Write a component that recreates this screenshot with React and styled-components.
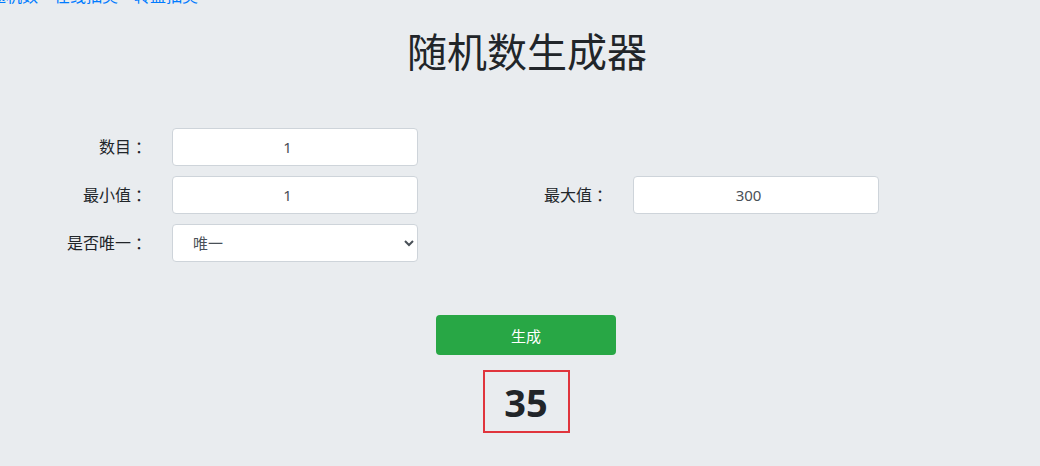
import React from "react";
import styled, { createGlobalStyle } from "styled-components";

const Global = createGlobalStyle`
  html, body { margin: 0; padding: 0; background: #e9ecef; }
  body {
    font-family: "Noto Sans", "Noto Sans CJK SC", sans-serif;
    color: #212529;
    overflow: hidden;
  }
`;

const Page = styled.div`
  width: 1040px;
  height: 466px;
  display: flex;
  flex-direction: column;
  box-sizing: border-box;
`;

const Nav = styled.nav`
  display: flex;
  gap: 16px;
  height: 20px;
  line-height: 20px;
  margin-top: -14px;
  margin-left: -10px;
  font-size: 16px;
`;

const NavLink = styled.a`
  color: #007bff;
  text-decoration: none;
`;

const Title = styled.h1`
  margin: 22px 0 0;
  padding-left: 14px;
  text-align: center;
  font-size: 40px;
  line-height: 48px;
  font-weight: 400;
  color: #212529;
`;

const Form = styled.div`
  margin-top: 52px;
  display: grid;
  grid-template-columns: 147px 246px 165px 246px;
  grid-auto-rows: 38px;
  column-gap: 25px;
  row-gap: 10px;
  align-items: center;
`;

const Label = styled.label`
  display: flex;
  justify-content: flex-end;
  align-items: center;
  height: 38px;
  font-size: 16px;
  line-height: 20px;
  color: #212529;
  white-space: nowrap;
`;

const Colon = styled.span`
  font-family: "Noto Sans CJK TC", "Noto Sans CJK SC", sans-serif;
  line-height: 20px;
`;

const Input = styled.input`
  box-sizing: border-box;
  width: 246px;
  height: 38px;
  border: 1px solid #ced4da;
  border-radius: 4px;
  background: #fff;
  text-align: center;
  font-family: "Noto Sans", "Noto Sans CJK SC", sans-serif;
  font-size: 15px;
  color: #495057;
  outline: none;
  padding: 0 12px;
`;

const Select = styled.select`
  box-sizing: border-box;
  width: 246px;
  height: 38px;
  border: 1px solid #ced4da;
  border-radius: 4px;
  background: #fff;
  font-family: "Noto Sans", "Noto Sans CJK SC", sans-serif;
  font-size: 15px;
  color: #495057;
  padding: 0 6px 0 16px;
  outline: none;
`;

const Actions = styled.div`
  margin-top: 53px;
  padding-left: 12px;
  display: flex;
  flex-direction: column;
  align-items: center;
  gap: 15px;
`;

const Button = styled.button`
  width: 180px;
  height: 40px;
  border: none;
  border-radius: 4px;
  background: #28a745;
  color: #fff;
  font-family: "Noto Sans", "Noto Sans CJK SC", sans-serif;
  font-size: 15px;
  cursor: pointer;
`;

const Result = styled.div`
  box-sizing: border-box;
  width: 87px;
  height: 63px;
  border: 2px solid #e0353d;
  display: flex;
  align-items: center;
  justify-content: center;
  font-size: 38px;
  font-weight: 700;
  color: #212529;
  line-height: 1;
`;

function FieldLabel({ children }) {
  return (
    <Label>
      <span>{children}</span>
      <Colon>：</Colon>
    </Label>
  );
}

export default function App() {
  return (
    <Page>
      <Global />
      <Nav>
        <NavLink href="#">随机数</NavLink>
        <NavLink href="#">在线抽奖</NavLink>
        <NavLink href="#">转盘抽奖</NavLink>
      </Nav>
      <Title>随机数生成器</Title>
      <Form>
        <FieldLabel>数目</FieldLabel>
        <Input type="number" defaultValue="1" />
        <span />
        <span />
        <FieldLabel>最小值</FieldLabel>
        <Input type="number" defaultValue="1" />
        <FieldLabel>最大值</FieldLabel>
        <Input type="number" defaultValue="300" />
        <FieldLabel>是否唯一</FieldLabel>
        <Select defaultValue="unique">
          <option value="unique">唯一</option>
          <option value="repeat">可重复</option>
        </Select>
      </Form>
      <Actions>
        <Button>生成</Button>
        <Result>35</Result>
      </Actions>
    </Page>
  );
}
